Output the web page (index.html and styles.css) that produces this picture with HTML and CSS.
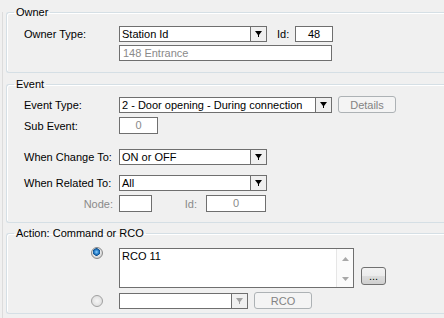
FILE: index.html
```html
<!DOCTYPE html>
<html lang="en">
<head>
    <meta charset="UTF-8">
    <title>Event Action</title>
    <link rel="stylesheet" href="styles.css">
</head>
<body>

<div class="panel">

    <!-- Owner -->
    <fieldset class="group owner">
        <legend>Owner</legend>
        <div class="row r-owner">
            <span class="lbl">Owner Type:</span>
            <div class="combo w-short">
                <span class="val">Station Id</span>
                <span class="drop"><svg width="7" height="6" viewBox="0 0 7 6"><path d="M0 0h7L4 4v2H3V4z" fill="#000"/></svg></span>
            </div>
            <span class="id-lbl">Id:</span>
            <div class="box id-box">48</div>
        </div>
        <div class="row r-name">
            <span class="lbl"></span>
            <div class="box w-long disabled-text">148 Entrance</div>
        </div>
    </fieldset>

    <!-- Event -->
    <fieldset class="group event">
        <legend>Event</legend>
        <div class="row r-type">
            <span class="lbl">Event Type:</span>
            <div class="combo w-long">
                <span class="val">2 - Door opening - During connection</span>
                <span class="drop"><svg width="7" height="6" viewBox="0 0 7 6"><path d="M0 0h7L4 4v2H3V4z" fill="#000"/></svg></span>
            </div>
            <button class="btn disabled details">Details</button>
        </div>
        <div class="row r-sub">
            <span class="lbl">Sub Event:</span>
            <div class="box sub-box disabled-text">0</div>
        </div>
        <div class="row r-change">
            <span class="lbl">When Change To:</span>
            <div class="combo w-short">
                <span class="val">ON or OFF</span>
                <span class="drop"><svg width="7" height="6" viewBox="0 0 7 6"><path d="M0 0h7L4 4v2H3V4z" fill="#000"/></svg></span>
            </div>
        </div>
        <div class="row r-related">
            <span class="lbl">When Related To:</span>
            <div class="combo w-short">
                <span class="val">All</span>
                <span class="drop"><svg width="7" height="6" viewBox="0 0 7 6"><path d="M0 0h7L4 4v2H3V4z" fill="#000"/></svg></span>
            </div>
        </div>
        <div class="row r-node">
            <span class="lbl lbl-right disabled-text">Node:</span>
            <div class="box node-box"></div>
            <span class="node-id disabled-text">Id:</span>
            <div class="box node-id-box disabled-text">0</div>
        </div>
    </fieldset>

    <!-- Action -->
    <fieldset class="group action">
        <legend>Action: Command or RCO</legend>
        <div class="row r-rco">
            <span class="lbl"><span class="radio checked"></span></span>
            <div class="memo">
                <div class="memo-text">RCO 11</div>
                <div class="memo-scroll">
                    <svg width="7" height="4" viewBox="0 0 7 4"><path d="M0 4h7L3.5 0z" fill="#a8a8a8"/></svg>
                    <svg width="7" height="4" viewBox="0 0 7 4"><path d="M0 0h7L3.5 4z" fill="#a8a8a8"/></svg>
                </div>
            </div>
            <button class="btn more">...</button>
        </div>
        <div class="row r-cmd">
            <span class="lbl"><span class="radio"></span></span>
            <div class="combo w-cmd">
                <span class="val"></span>
                <span class="drop"><svg width="7" height="6" viewBox="0 0 7 6"><path d="M0 0h7L4 4v2H3V4z" fill="#a0a0a0"/></svg></span>
            </div>
            <button class="btn disabled rco">RCO</button>
        </div>
    </fieldset>

</div>

</body>
</html>
```

FILE: styles.css
```css
html, body {
    margin: 0;
    padding: 0;
    background-color: #f0f0f0;
    overflow: hidden;
}
body {
    font-family: "Liberation Sans", Arial, sans-serif;
    font-size: 11px;
    color: #000;
    width: 444px;
    height: 318px;
    /* faint page edge on the left */
    background-image: linear-gradient(#dcdcdc, #dcdcdc);
    background-position: 2px 12px;
    background-size: 1px 100%;
    background-repeat: no-repeat;
}
.panel {
    padding: 0 0 0 6px;
    display: flex;
    flex-direction: column;
}

/* group boxes (they run on past the right edge) */
.group {
    box-sizing: border-box;
    width: 100%;
    min-width: 0;
    margin: 0;
    padding: 0 0 0 7px;
    border: 1px solid #d5dfe5;
    border-right: 0;
    border-radius: 3px 0 0 3px;
    box-shadow: inset 1px 1px 0 #fff;
}
.group legend {
    padding: 0 2px;
    line-height: 13px;
    height: 13px;
}
.owner { margin-top: 6px; padding-bottom: 11px; }
.event { margin-top: 5px; padding-bottom: 10px; }
.action { margin-top: 4px; padding-bottom: 4px; }

/* rows */
.row {
    display: flex;
    align-items: center;
    padding-left: 10px;
}
.lbl {
    width: 95px;
    flex: none;
    white-space: nowrap;
}
.lbl-right {
    text-align: right;
    box-sizing: border-box;
    padding-right: 6px;
}
.r-owner { margin-top: 7px; height: 16px; }
.r-name { margin-top: 3px; height: 16px; }
.r-type { margin-top: 5px; height: 17px; }
.r-sub { margin-top: 4px; height: 17px; }
.r-change { margin-top: 15px; height: 16px; }
.r-related { margin-top: 10px; height: 16px; }
.r-node { margin-top: 4px; height: 17px; }
.r-rco { margin-top: 8px; height: 40px; align-items: flex-end; }
.r-cmd { margin-top: 4px; height: 17px; }

.disabled-text {
    color: #8a8a8a;
}

/* edit boxes */
.box {
    box-sizing: border-box;
    height: 16px;
    border: 1px solid #6f6f6f;
    background-color: #fff;
    line-height: 14px;
    padding: 0 3px;
    white-space: nowrap;
    overflow: hidden;
}
.w-long { width: 213px; }
.id-box { width: 38px; text-align: center; }
.sub-box { width: 39px; height: 17px; line-height: 15px; text-align: center; }
.node-box { width: 33px; height: 17px; }
.node-id-box { width: 60px; height: 17px; line-height: 15px; text-align: center; }
.id-lbl { width: 18px; margin-left: 10px; }
.node-id {
    width: 54px;
    box-sizing: border-box;
    text-align: right;
    padding-right: 9px;
}

/* combo boxes */
.combo {
    box-sizing: border-box;
    height: 16px;
    display: flex;
    border: 1px solid #6f6f6f;
    background-color: #fff;
}
.combo .val {
    flex: 1;
    line-height: 14px;
    padding-left: 2px;
    white-space: nowrap;
    overflow: hidden;
}
.combo .drop {
    width: 15px;
    flex: none;
    border-left: 1px solid #6f6f6f;
    background-color: #f0f0f0;
    display: flex;
    align-items: center;
    justify-content: center;
}
.w-short { width: 148px; }
.w-cmd { width: 129px; }

/* buttons */
.btn {
    font-family: inherit;
    font-size: 11px;
    box-sizing: border-box;
    height: 17px;
    padding: 0;
    border: 1px solid #707070;
    border-radius: 3px;
    background: linear-gradient(#f2f2f2, #ebebeb 50%, #dddddd 50%, #cfcfcf);
    color: #000;
}
.btn.disabled {
    border-color: #adb2b5;
    background: #f4f4f4;
    color: #838383;
}
.details { width: 58px; margin-left: 6px; }
.rco { width: 58px; margin-left: 6px; }
.more {
    width: 25px;
    height: 18px;
    margin-left: 7px;
    margin-bottom: 3px;
    line-height: 10px;
}

/* memo */
.memo {
    box-sizing: border-box;
    width: 235px;
    height: 40px;
    border: 1px solid #6f6f6f;
    background-color: #fff;
    display: flex;
}
.memo-text {
    flex: 1;
    padding: 1px 2px;
    line-height: 13px;
}
.memo-scroll {
    width: 16px;
    border-left: 1px solid #e6e6e6;
    background-color: #fbfbfb;
    display: flex;
    flex-direction: column;
    align-items: center;
    justify-content: space-between;
    padding: 8px 0 6px;
}

/* radio buttons */
.radio {
    display: block;
    width: 12px;
    height: 12px;
    box-sizing: border-box;
    margin-left: 67px;
    border: 1px solid #a0a0a0;
    border-radius: 50%;
    background: radial-gradient(circle at 50% 50%, #f6f6f6, #d8d8d8);
}
.radio.checked {
    border-color: #8a8a8a;
    background: radial-gradient(circle at 45% 40%, #8fd0ff 0, #2f86cf 2px, #0d4f8f 3.5px, #e7e7e7 4px, #d0d0d0 6px);
}
.r-rco .lbl {
    align-self: flex-start;
    margin-top: -1px;
}
```
